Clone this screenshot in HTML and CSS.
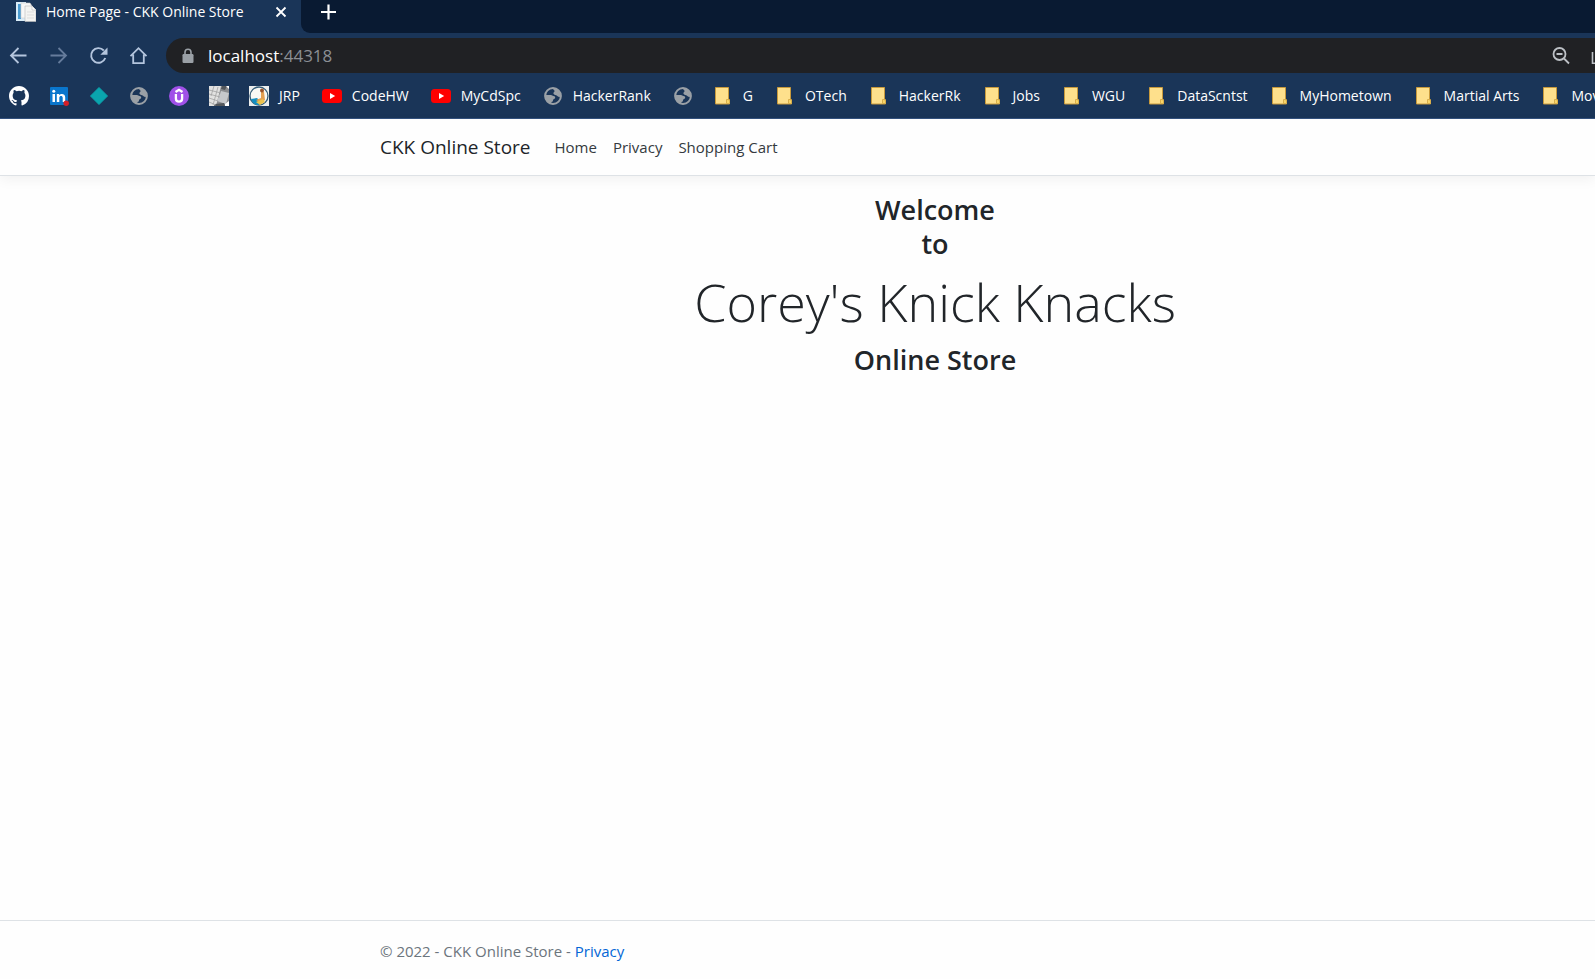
FILE: index.html
```html
<!DOCTYPE html>
<html lang="en">
<head>
<meta charset="utf-8">
<title>Home Page - CKK Online Store</title>
<link rel="stylesheet" href="styles.css">
</head>
<body>
<svg class="sprite" aria-hidden="true">
  <symbol id="globe" viewBox="0 0 20 20">
    <circle cx="10" cy="10" r="7.9" fill="none" stroke="#9aa0a6" stroke-width="2"/>
    <path fill="#9aa0a6" d="M2 9l6 0c1 0 1.500 1 2.500 1 1.500 0 2 1 1.500 2.200-.5 1-2 .8-2 2 0 1-.5 1.600-1.500 1.800L8 18C4 17 2 14 2 9zM10 2c4 0 7.500 3.500 8 8-1.500 1.500-3 1-4-.2-.8-1-3-.6-3.500-2C10 6.500 11.500 6.200 11.600 5c0-1-1.600-1-1.600-3z"/>
  </symbol>
  <symbol id="youtube" viewBox="0 0 20 20">
    <rect y="3" width="20" height="14" rx="3.500" fill="#f00"/>
    <path fill="#fff" d="M8 7v6l5.200-3z"/>
  </symbol>
  <symbol id="folder" viewBox="0 0 20 20">
    <path fill="#fee08c" stroke="#c89a3c" d="M2.500 1.500h13v12h1v4.500h-14z"/>
    <path fill="#f8d568" stroke="#d9ae4b" d="M13.500 17.500v-4h1.500l1.500 1v3z"/>
  </symbol>
</svg>
<div class="window">
  <header class="browser">
    <div class="tabs">
      <div class="tab">
        <svg class="icon" viewBox="0 0 20 20"><path fill="#d9ecf8" d="M0 0h10v19H0z"/><path fill="#4a9bd0" d="M2 2h3v15H2z"/><path fill="#f7f7f7" stroke="#ccc" stroke-width=".6" d="M5 1h9l2 3v12H5z"/><path fill="#f4f4f2" stroke="#bbb" stroke-width=".6" d="M9 4h7l4 4v11.500H9z"/><path fill="#fff" stroke="#bbb" stroke-width=".6" d="M16 4v4h4"/><path stroke="#ddd" d="M11 10h7M11 13h7M11 16h7"/></svg>
        <span class="tab-title">Home Page - CKK Online Store</span>
        <button class="plain" aria-label="Close tab"><svg class="small" viewBox="0 0 12 12"><path d="M1.500 1.500l9 9m0-9l-9 9" stroke="#fff" stroke-width="1.800"/></svg></button>
      </div>
      <button class="plain new-tab" aria-label="New tab"><svg class="icon" viewBox="0 0 20 20"><path d="M10.500 2.500v15M3 10h15" stroke="#fff" stroke-width="2.200"/></svg></button>
    </div>
    <div class="toolbar">
      <button class="plain" aria-label="Back"><svg class="icon" viewBox="0 0 20 20" fill="none" stroke="#b4c5dd" stroke-width="1.800"><path d="M17.500 9.500H2.500M9.500 2L2 9.500 9.500 17"/></svg></button>
      <button class="plain" aria-label="Forward"><svg class="icon" viewBox="0 0 20 20" fill="none" stroke="#667c9c" stroke-width="1.800"><path d="M1.500 9.500h15M9.500 2L17 9.500 9.500 17"/></svg></button>
      <button class="plain" aria-label="Reload"><svg class="icon" viewBox="0 0 20 20" fill="none" stroke="#b4c5dd" stroke-width="1.900"><path d="M16.300 12A7.300 7.300 0 1 1 14.800 4.500"/><path fill="#b4c5dd" stroke="none" d="M18.500 1.500v7.200h-7.200z"/></svg></button>
      <button class="plain" aria-label="Home"><svg class="icon" viewBox="0 0 20 20" fill="none" stroke="#b4c5dd" stroke-width="1.800"><path d="M1.500 10.200L9.500 2.200l8 8M4.200 8.600v8.600h10.600V8.600"/></svg></button>
      <div class="address">
        <svg class="lock" viewBox="0 0 12 16"><path fill="none" stroke="#9aa0a6" stroke-width="1.600" d="M3 7V4.200a3 3 0 0 1 6 0V7"/><rect x=".5" y="6" width="11" height="9" rx="1.200" fill="#9aa0a6"/></svg>
        <span class="url">localhost<span class="port">:44318</span></span>
        <button class="plain" aria-label="Zoom"><svg class="icon" viewBox="0 0 20 20" fill="none" stroke="#bdc1c6" stroke-width="1.800"><circle cx="8.500" cy="8" r="6"/><path d="M13 12.500l5 5M5.500 8h6"/></svg></button>
        <button class="plain share" aria-label="Share"><svg class="share-icon" viewBox="0 0 4 20" fill="none" stroke="#bdc1c6" stroke-width="1.600"><path d="M1.500 6v11.300H4"/></svg></button>
      </div>
    </div>
    <nav class="bookmarks" aria-label="Bookmarks">
      <a href="#" aria-label="GitHub"><svg class="icon" viewBox="0 0 16 16"><path fill="#fff" d="M8 0C3.580 0 0 3.580 0 8c0 3.540 2.290 6.530 5.470 7.590.4.070.55-.17.55-.38 0-.19-.01-.82-.01-1.490-2.010.37-2.530-.49-2.690-.94-.09-.23-.48-.94-.82-1.130-.28-.15-.68-.52-.01-.53.63-.01 1.080.58 1.230.82.720 1.210 1.870.87 2.330.66.070-.52.280-.87.510-1.070-1.780-.2-3.640-.89-3.640-3.950 0-.87.31-1.590.82-2.150-.08-.2-.36-1.020.08-2.120 0 0 .67-.21 2.200.82a7.600 7.600 0 0 1 4 0c1.530-1.040 2.200-.82 2.200-.82.44 1.100.16 1.920.08 2.120.51.560.82 1.270.82 2.150 0 3.070-1.870 3.750-3.650 3.950.29.250.54.730.54 1.480 0 1.070-.01 1.930-.01 2.200 0 .21.150.46.550.38A8.010 8.010 0 0 0 16 8c0-4.420-3.580-8-8-8z"/></svg></a>
      <a href="#" aria-label="LinkedIn"><svg class="icon" viewBox="0 0 20 20"><rect x="1" y="1" width="18" height="18" rx="1" fill="#0a76cc"/><path fill="#fff" d="M3.500 8h2.500v8H3.500zM7.800 8h2.400v1.200c1.400-2 6-2 6 2V16h-2.500v-4.200c0-2.600-3.400-2.300-3.400 0V16H7.800z"/><circle cx="4.750" cy="5.200" r="1.500" fill="#fff"/><circle cx="17.200" cy="17.300" r="2.700" fill="#d51f26"/></svg></a>
      <a href="#" aria-label="Diamond"><svg class="icon" viewBox="0 0 20 20"><path fill="#0aa5ae" stroke="#0aa5ae" stroke-linejoin="round" d="M10 1.500l8.500 8.500-8.500 8.500L1.500 10z"/></svg></a>
      <a href="#" aria-label="Website"><svg class="icon"><use href="#globe"/></svg></a>
      <a href="#" aria-label="Udemy"><svg class="icon" viewBox="0 0 20 20"><circle cx="10" cy="10" r="10" fill="#a051e8"/><path fill="none" stroke="#fff" stroke-width="2.300" d="M6.900 8v4.500c0 4.200 6.200 4.200 6.200 0V8M6.500 6L10 3.800 13.500 6"/></svg></a>
      <a href="#" aria-label="Keyboard"><svg class="icon" viewBox="0 0 20 20"><path fill="#8b8c8f" d="M0 0h20v20H0z"/><path fill="#e2e2e1" d="M0 0h12L7 20H0z"/><path fill="#c6c8cb" d="M12 5l8 2-3 11-9-3z"/><path fill="#53575b" d="M13 0h5l-2 4-4-1zM6 18l9-1 1 3H5z"/><path fill="#fff" d="M17 0h3v3zM16 18l4-3v5h-4z"/><path fill="none" stroke="#a2a2a2" stroke-width=".8" d="M0 4l12 3M0 8l11 3M0 12l9 3M0 16l7 3M5 0L2 10M9 1L4 19"/></svg></a>
      <a class="named" href="#"><svg class="icon" viewBox="0 0 20 20"><path fill="#eceeed" d="M0 0h20v20H0z"/><circle cx="10" cy="10" r="9" fill="#f8f8f4" stroke="#355d78" stroke-width="1.300"/><path fill="#168fc0" d="M2 13l6-1 5 5-4 2c-4 0-6-3-7-6z"/><path fill="#e4a052" d="M12 6h3l1 8-4 3-5-3 5-2z"/><circle cx="13" cy="4.500" r="2" fill="#9b5429"/><path fill="#edc34e" d="M7 16l7-3 2 3-5 3z"/></svg>JRP</a>
      <a class="named" href="#"><svg class="icon"><use href="#youtube"/></svg>CodeHW</a>
      <a class="named" href="#"><svg class="icon"><use href="#youtube"/></svg>MyCdSpc</a>
      <a class="named" href="#"><svg class="icon"><use href="#globe"/></svg>HackerRank</a>
      <a href="#" aria-label="Website"><svg class="icon"><use href="#globe"/></svg></a>
      <a class="named" href="#"><svg class="icon"><use href="#folder"/></svg>G</a>
      <a class="named" href="#"><svg class="icon"><use href="#folder"/></svg>OTech</a>
      <a class="named" href="#"><svg class="icon"><use href="#folder"/></svg>HackerRk</a>
      <a class="named" href="#"><svg class="icon"><use href="#folder"/></svg>Jobs</a>
      <a class="named" href="#"><svg class="icon"><use href="#folder"/></svg>WGU</a>
      <a class="named" href="#"><svg class="icon"><use href="#folder"/></svg>DataScntst</a>
      <a class="named" href="#"><svg class="icon"><use href="#folder"/></svg>MyHometown</a>
      <a class="named" href="#"><svg class="icon"><use href="#folder"/></svg>Martial Arts</a>
      <a class="named last" href="#"><svg class="icon"><use href="#folder"/></svg><span class="clip">Mov</span></a>
    </nav>
  </header>
  <div class="page">
    <nav class="navbar">
      <div class="container nav-row">
        <a class="brand" href="#">CKK Online Store</a>
        <a href="#">Home</a>
        <a href="#">Privacy</a>
        <a href="#">Shopping Cart</a>
      </div>
    </nav>
    <main class="welcome">
      <div class="container">
        <h3>Welcome<br>to</h3>
        <h1>Corey's Knick Knacks</h1>
        <h3>Online Store</h3>
      </div>
    </main>
    <footer class="footer">
      <div class="container">© 2022 - CKK Online Store - <a href="#">Privacy</a></div>
    </footer>
  </div>
</div>
</body>
</html>
```
FILE: styles.css
```css
* { box-sizing: border-box; }

body {
  margin: 0;
  font-family: "Segoe UI", "Open Sans", "Noto Sans", sans-serif;
  font-size: 15px;
  background: #fefefe;
}

a { color: inherit; text-decoration: none; }

.sprite { position: absolute; width: 0; height: 0; }

.window {
  display: flex;
  flex-direction: column;
  min-height: 100vh;
}

.icon { display: block; flex: none; width: 20px; height: 20px; }
.small { display: block; width: 12px; height: 12px; }
.lock { width: 12px; height: 16px; }
.share-icon { display: block; width: 4px; height: 20px; }

.plain {
  display: block;
  padding: 0;
  border: 0;
  background: none;
}

.browser {
  background: #1a3558;
  border-bottom: 1px solid #34527f;
  color: #fff;
}

.tabs {
  display: flex;
  height: 33px;
  background: #1a3558;
}

.tab {
  display: flex;
  align-items: flex-start;
  flex: none;
  width: 301px;
  padding: 2px 14px 0 16px;
  font-size: 14px;
  line-height: 20px;
}

.tab-title { flex: 1; margin-left: 10px; white-space: nowrap; }
.tab .small { margin-top: 4px; }

.new-tab {
  display: flex;
  align-items: flex-start;
  flex: 1;
  padding: 2px 0 0 17px;
  background: #091a32;
  border-bottom-left-radius: 9px;
}

.toolbar {
  display: flex;
  align-items: center;
  gap: 20px;
  height: 45px;
  padding-left: 9px;
}

.address {
  display: flex;
  align-items: center;
  flex: 1;
  height: 35px;
  margin-left: -3px;
  padding-left: 16px;
  border-radius: 18px 0 0 18px;
  background: #202124;
  font-size: 17px;
}

.url { flex: 1; margin-left: 14px; }
.port { color: #8b8f94; }
.share { margin-left: 20px; }

.bookmarks {
  display: flex;
  align-items: center;
  gap: 20px;
  height: 40px;
  padding: 0 0 4px 9px;
  font-size: 14px;
  line-height: 20px;
  white-space: nowrap;
}

.bookmarks a { display: flex; flex: none; align-items: center; gap: 10px; }
.bookmarks .named { padding-right: 2px; }
.bookmarks .last { flex: 1 1 0; min-width: 0; padding-right: 0; }
.clip { flex: 1; min-width: 0; overflow: hidden; }

.page {
  display: flex;
  flex: 1;
  flex-direction: column;
  color: #212529;
}

.navbar, .welcome, .footer { padding-left: 275px; }

.container {
  max-width: 1140px;
  margin: 0 auto;
  padding: 0 15px;
}

.navbar {
  border-bottom: 1px solid #dee2e6;
  box-shadow: 0 4px 12px rgba(0, 0, 0, 0.05);
}

.nav-row {
  display: flex;
  align-items: center;
  gap: 16px;
  height: 56px;
  color: #343a40;
}

.brand { margin-right: 8px; font-size: 19px; color: #212529; }

.welcome { flex: 1; padding-top: 17px; text-align: center; }

h1, h3 { margin: 0 0 8px; }
h3 { font-size: 27px; font-weight: 600; line-height: 34px; }
h1 { font-size: 52px; font-weight: 300; line-height: 66px; }

.footer {
  border-top: 1px solid #dee2e6;
  color: #6c757d;
  line-height: 60px;
  height: 59px;
}

.footer a { color: #0366d6; }
```
